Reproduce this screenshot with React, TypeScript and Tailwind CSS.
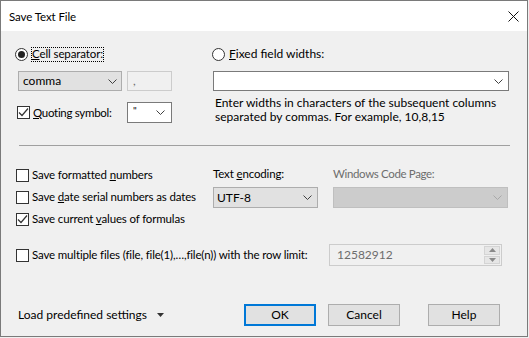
import React from "react";

function Chevron({ color = "#404040" }: { color?: string }) {
  return (
    <svg width="9" height="5" viewBox="0 0 9 5" className="shrink-0">
      <path d="M0.5 0.5 L4.5 4.5 L8.5 0.5" fill="none" stroke={color} strokeWidth="1" />
    </svg>
  );
}

function Radio({ checked }: { checked?: boolean }) {
  return (
    <span className="w-[13px] h-[13px] rounded-full border border-[#333] bg-white flex items-center justify-center shrink-0">
      {checked && <span className="w-[7px] h-[7px] rounded-full bg-[#222]" />}
    </span>
  );
}

function Check({ checked }: { checked?: boolean }) {
  return (
    <span className="w-[13px] h-[13px] border border-[#333] bg-white flex items-center justify-center shrink-0">
      {checked && (
        <svg width="11" height="11" viewBox="0 0 11 11">
          <path d="M1 5.5 L4 8.5 L10 1.5" fill="none" stroke="#333" strokeWidth="1.2" />
        </svg>
      )}
    </span>
  );
}

function CheckRow({ checked, children }: { checked?: boolean; children: React.ReactNode }) {
  return (
    <div className="h-[22px] flex items-center gap-[3px] pl-[1px]">
      <Check checked={checked} />
      <span className="whitespace-nowrap text-[11.5px] tracking-[-0.15px]">{children}</span>
    </div>
  );
}

function Btn({ children, primary }: { children: React.ReactNode; primary?: boolean }) {
  return (
    <div
      className={
        primary
          ? "w-[72px] h-[22px] border-2 border-[#0078d7] bg-[#e1e1e1] flex items-center justify-center"
          : "w-[72px] h-[22px] border border-[#adadad] bg-[#e1e1e1] flex items-center justify-center"
      }
    >
      <span>{children}</span>
    </div>
  );
}

export default function App() {
  return (
    <div className="w-[529px] h-[338px] bg-[#f0f0f0] font-['Lato',sans-serif] text-[12px] text-black leading-[14px]">
      <div className="w-[528px] h-[337px] border border-[#7a7a7a] flex flex-col bg-[#f0f0f0]">
        {/* Title bar */}
        <div className="h-[30px] bg-white flex items-center justify-between pl-[8px] pr-[8px] shrink-0">
          <span className="text-[11.5px] tracking-[-0.1px] mt-[1px]">Save Text File</span>
          <svg width="11" height="11" viewBox="0 0 11 11">
            <path d="M0.5 0.5 L10.5 10.5 M10.5 0.5 L0.5 10.5" stroke="#111" strokeWidth="1" />
          </svg>
        </div>

        {/* Body */}
        <div className="flex flex-col pl-[14px] pt-[15px]">
          {/* Top section */}
          <div className="flex">
            {/* Left column */}
            <div className="w-[197px] flex flex-col">
              <div className="h-[16px] flex items-center gap-[3px]">
                <Radio checked />
                <span className="border border-dotted border-black leading-[12px] pb-[1px] text-[11.5px] tracking-[-0.1px]">
                  <span className="underline">C</span>ell separator:
                </span>
              </div>
              <div className="mt-[9px] flex items-center ml-[3px]">
                <div className="w-[104px] h-[20px] border border-[#adadad] bg-[#e1e1e1] flex items-center justify-between pl-[4px] pr-[4px]">
                  <span>comma</span>
                  <Chevron />
                </div>
                <div className="ml-[5px] w-[45px] h-[20px] border border-[#cccccc] bg-[#f0f0f0] flex items-center pl-[5px] text-[#6d6d6d]">
                  <span>,</span>
                </div>
              </div>
              <div className="mt-[11px] flex items-center">
                <div className="w-[112px] flex items-center gap-[3px] pl-[2px]">
                  <Check checked />
                  <span className="text-[11.5px] tracking-[-0.3px]">
                    <span className="underline">Q</span>uoting symbol:
                  </span>
                </div>
                <div className="w-[45px] h-[21px] border border-[#7a7a7a] bg-white flex items-start justify-between pl-[5px] pr-[6px]">
                  <span className="text-[10px] leading-[12px] mt-[1px]">"</span>
                  <span className="self-center">
                    <Chevron />
                  </span>
                </div>
              </div>
            </div>

            {/* Right column */}
            <div className="flex flex-col">
              <div className="h-[16px] flex items-center gap-[4px]">
                <Radio />
                <span>
                  <span className="underline">F</span>ixed field widths:
                </span>
              </div>
              <div className="mt-[9px] ml-[1px] w-[296px] h-[20px] border border-[#7a7a7a] bg-white flex items-center justify-end pr-[5px]">
                <Chevron />
              </div>
              <div className="mt-[5px] pl-[3px] leading-[14px] whitespace-nowrap">
                Enter widths in characters of the subsequent columns
                <br />
                separated by commas. For example, 10,8,15
              </div>
            </div>
          </div>

          {/* Separator */}
          <div className="mt-[21px] ml-[4px] w-[491px] h-px bg-[#a0a0a0]" />

          {/* Middle section */}
          <div className="mt-[18px] flex">
            <div className="w-[198px] flex flex-col">
              <CheckRow>
                Save formatted <span className="underline">n</span>umbers
              </CheckRow>
              <CheckRow>
                Save <span className="underline">d</span>ate serial numbers as dates
              </CheckRow>
              <CheckRow checked>
                Save current <span className="underline">v</span>alues of formulas
              </CheckRow>
            </div>
            <div className="w-[105px] pt-[2px] flex flex-col">
              <div className="h-[16px] flex items-center">
                <span className="text-[11.5px] tracking-[-0.15px]">
                  Text <span className="underline">e</span>ncoding:
                </span>
              </div>
              <div className="mt-[5px] h-[21px] border border-[#adadad] bg-[#e1e1e1] flex items-center justify-between pl-[3px] pr-[5px]">
                <span>UTF-8</span>
                <Chevron />
              </div>
            </div>
            <div className="ml-[15px] w-[175px] pt-[2px] flex flex-col">
              <div className="h-[16px] flex items-center text-[#6d6d6d]">
                <span className="text-[11.5px] tracking-[-0.35px]">Windows Code Page:</span>
              </div>
              <div className="mt-[5px] h-[21px] border border-[#bfbfbf] bg-[#cccccc] flex items-center justify-end pr-[5px]">
                <Chevron color="#a8a8a8" />
              </div>
            </div>
          </div>

          {/* Save multiple */}
          <div className="mt-[14px] flex items-center h-[22px]">
            <div className="w-[314px] flex items-center gap-[3px] pl-[1px]">
              <Check />
              <span className="whitespace-nowrap text-[11.5px] tracking-[-0.15px]">
                Save multiple files (file, file(1),…,file(n)) with the row limit:
              </span>
            </div>
            <div className="w-[173px] h-[22px] border border-[#cccccc] bg-[#f0f0f0] flex items-stretch">
              <div className="flex-1 flex items-center pl-[7px] text-[#6d6d6d]">
                <span>12582912</span>
              </div>
              <div className="w-[17px] flex flex-col gap-px py-px pr-px">
                <div className="flex-1 bg-[#e6e6e6] border border-[#d4d4d4] flex items-center justify-center">
                  <svg width="7" height="4" viewBox="0 0 7 4">
                    <path d="M0 4 L3.5 0 L7 4 Z" fill="#8a8a8a" />
                  </svg>
                </div>
                <div className="flex-1 bg-[#e6e6e6] border border-[#d4d4d4] flex items-center justify-center">
                  <svg width="7" height="4" viewBox="0 0 7 4">
                    <path d="M0 0 L3.5 4 L7 0 Z" fill="#8a8a8a" />
                  </svg>
                </div>
              </div>
            </div>
          </div>

          {/* Bottom buttons */}
          <div className="mt-[38px] flex items-center h-[22px]">
            <div className="w-[229px] pl-[3px] flex items-center gap-[10px]">
              <span>Load predefined settings</span>
              <svg width="7" height="4" viewBox="0 0 7 4">
                <path d="M0 0 L3.5 4 L7 0 Z" fill="#333" />
              </svg>
            </div>
            <Btn primary>OK</Btn>
            <div className="ml-[12px]">
              <Btn>Cancel</Btn>
            </div>
            <div className="ml-[28px]">
              <Btn>Help</Btn>
            </div>
          </div>
        </div>
      </div>
    </div>
  );
}
